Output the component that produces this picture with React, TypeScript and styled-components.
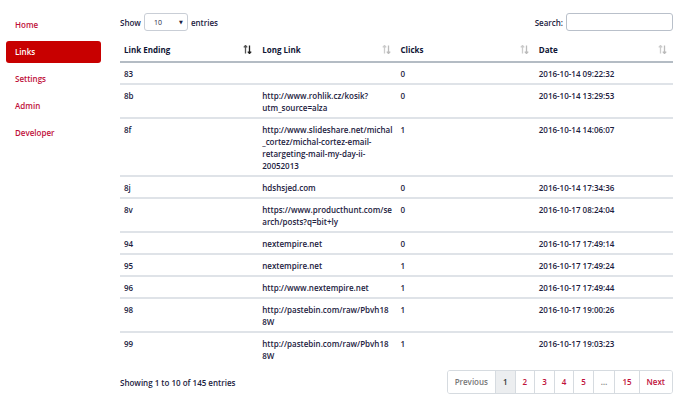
import styled, { createGlobalStyle } from 'styled-components';

const GlobalStyle = createGlobalStyle`
  body {
    margin: 0;
    background: #fff;
    font-family: "Open Sans", "DejaVu Sans", sans-serif;
    color: #1c2140;
  }
`;

const rows = [
  { end: '83', link: '', clicks: '0', date: '2016-10-14 09:22:32' },
  { end: '8b', link: 'http://www.rohlik.cz/kosik?\nutm_source=alza', clicks: '0', date: '2016-10-14 13:29:53' },
  { end: '8f', link: 'http://www.slideshare.net/michal\n_cortez/michal-cortez-email-\nretargeting-mail-my-day-ii-\n20052013', clicks: '1', date: '2016-10-14 14:06:07' },
  { end: '8j', link: 'hdshsjed.com', clicks: '0', date: '2016-10-14 17:34:36' },
  { end: '8v', link: 'https://www.producthunt.com/se\narch/posts?q=bit+ly', clicks: '0', date: '2016-10-17 08:24:04' },
  { end: '94', link: 'nextempire.net', clicks: '0', date: '2016-10-17 17:49:14' },
  { end: '95', link: 'nextempire.net', clicks: '1', date: '2016-10-17 17:49:24' },
  { end: '96', link: 'http://www.nextempire.net', clicks: '1', date: '2016-10-17 17:49:44' },
  { end: '98', link: 'http://pastebin.com/raw/Pbvh18\n8W', clicks: '1', date: '2016-10-17 19:00:26' },
  { end: '99', link: 'http://pastebin.com/raw/Pbvh18\n8W', clicks: '1', date: '2016-10-17 19:03:23' },
];

const navItems = ['Home', 'Links', 'Settings', 'Admin', 'Developer'];
const pages = ['1', '2', '3', '4', '5', '…', '15'];

const SortIcon = ({ active }: { active?: boolean }) => (
  <SortSvg width="9" height="9" viewBox="0 0 9 9">
    <path d="M2.5 0.5 V8.5 M0.8 2.4 L2.5 0.5 L4.2 2.4" stroke={active ? '#555' : '#ccc'} strokeWidth="1.3" fill="none" />
    <path d="M6.5 0.5 V8.5 M4.8 6.6 L6.5 8.5 L8.2 6.6" stroke={active ? '#222' : '#bbb'} strokeWidth="1.3" fill="none" />
  </SortSvg>
);

const App = () => {
  return (
    <Page>
      <GlobalStyle />
      <Sidebar>
        {navItems.map((n) => (
          <NavItem key={n} $active={n === 'Links'}>{n}</NavItem>
        ))}
      </Sidebar>
      <Main>
        <TopBar>
          <Label>
            Show
            <Select>
              <span>10</span>
              <Caret>▼</Caret>
            </Select>
            entries
          </Label>
          <Label>
            Search:
            <SearchInput />
          </Label>
        </TopBar>
        <Table>
          <thead>
            <tr>
              <Th>Link Ending<SortIcon active /></Th>
              <Th>Long Link<SortIcon /></Th>
              <Th>Clicks<SortIcon /></Th>
              <Th>Date<SortIcon /></Th>
            </tr>
          </thead>
          <tbody>
            {rows.map((r, i) => (
              <Tr key={i} $last={i === rows.length - 1}>
                <Td>{r.end}</Td>
                <Td>{r.link}</Td>
                <Td>{r.clicks}</Td>
                <Td>{r.date}</Td>
              </Tr>
            ))}
          </tbody>
        </Table>
        <Footer>
          <Info>Showing 1 to 10 of 145 entries</Info>
          <Pager>
            <PageBtn $muted>Previous</PageBtn>
            {pages.map((p) => (
              <PageBtn key={p} $current={p === '1'} $muted={p === '…'}>{p}</PageBtn>
            ))}
            <PageBtn>Next</PageBtn>
          </Pager>
        </Footer>
      </Main>
    </Page>
  );
};

export default App;

const Page = styled.div`
  display: flex;
  width: 697px;
  height: 410px;
  overflow: hidden;
`;

const Sidebar = styled.nav`
  width: 95px;
  padding: 14px 0 0 6px;
  margin-right: 19px;
  display: flex;
  flex-direction: column;
  gap: 5px;
`;

const NavItem = styled.div<{ $active?: boolean }>`
  height: 22px;
  line-height: 22px;
  padding-left: 9px;
  font-size: 8px;
  font-weight: 600;
  border-radius: 3px;
  color: ${(p) => (p.$active ? '#fff' : '#c0103a')};
  background: ${(p) => (p.$active ? '#c80000' : 'transparent')};
`;

const Main = styled.div`
  flex: 1;
  padding: 13px 24px 0 0;
  display: flex;
  flex-direction: column;
`;

const TopBar = styled.div`
  display: flex;
  justify-content: space-between;
  align-items: center;
  height: 18px;
  margin-bottom: 6px;
`;

const Label = styled.div`
  display: flex;
  align-items: center;
  gap: 3px;
  font-size: 8px;
  font-weight: 600;
`;

const Select = styled.div`
  width: 44px;
  height: 18px;
  box-sizing: border-box;
  border: 1px solid #c9ced6;
  border-radius: 3px;
  display: flex;
  align-items: center;
  justify-content: space-between;
  padding: 0 4px 0 9px;
  font-size: 7px;
  font-weight: 400;
`;

const Caret = styled.span`
  font-size: 5px;
`;

const SearchInput = styled.div`
  width: 107px;
  height: 18px;
  box-sizing: border-box;
  border: 1px solid #b9c0ca;
  border-radius: 3px;
`;

const Table = styled.table`
  width: 100%;
  border-collapse: collapse;
  table-layout: fixed;
  font-size: 8px;
  font-weight: 600;
`;

const Th = styled.th`
  position: relative;
  text-align: left;
  font-weight: 700;
  height: 24px;
  padding: 0 4px;
  border-bottom: 2px solid #b4bcc4;
  color: #101535;
`;

const SortSvg = styled.svg`
  position: absolute;
  right: 6px;
  top: 8px;
`;

const Tr = styled.tr<{ $last?: boolean }>`
  border-bottom: ${(p) => (p.$last ? 'none' : '2px solid #dfe3e8')};
`;

const Td = styled.td`
  vertical-align: top;
  padding: 5px 4px 3px;
  line-height: 12px;
  white-space: pre-line;
  color: #1c2140;
`;

const Footer = styled.div`
  display: flex;
  justify-content: space-between;
  align-items: center;
  margin-top: 5px;
`;

const Info = styled.div`
  font-size: 8px;
  font-weight: 600;
`;

const Pager = styled.div`
  display: flex;
  border: 1px solid #d6dbe0;
  border-radius: 3px;
  overflow: hidden;
`;

const PageBtn = styled.div<{ $current?: boolean; $muted?: boolean }>`
  height: 22px;
  line-height: 22px;
  padding: 0 7px;
  font-size: 8px;
  font-weight: 600;
  border-left: 1px solid #d6dbe0;
  background: ${(p) => (p.$current ? '#eceef0' : '#fff')};
  color: ${(p) => (p.$current ? '#333' : p.$muted ? '#777' : '#c0103a')};
  &:first-child {
    border-left: none;
  }
`;
